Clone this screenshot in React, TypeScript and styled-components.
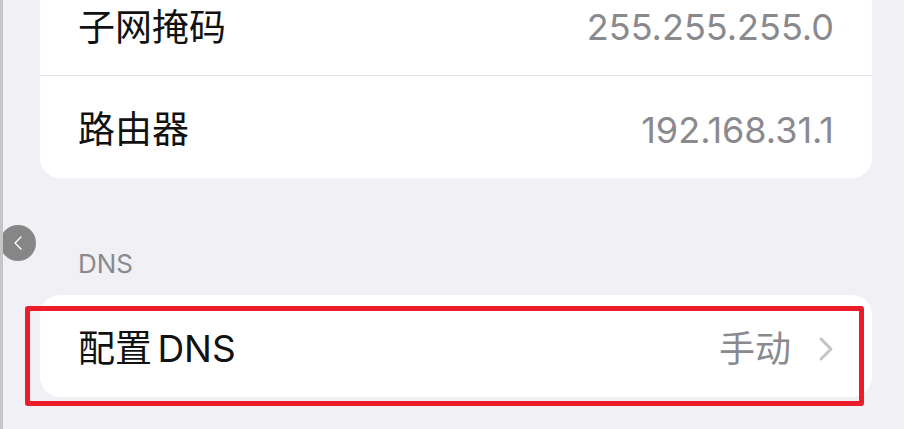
import React from 'react';
import styled, { createGlobalStyle } from 'styled-components';

const GlobalStyle = createGlobalStyle`
  html, body {
    margin: 0;
    padding: 0;
    background: #f0f0f5;
  }
  body {
    font-family: Inter, "Noto Sans CJK SC", sans-serif;
  }
`;

const Page = styled.div`
  position: relative;
  height: 429px;
  overflow: hidden;
  background: #f0f0f5;
  border-left: 3px solid #c6c6c8;
  padding: 0 32px 0 37px;
  box-sizing: border-box;
`;

const Card = styled.div<{ $top?: number }>`
  position: relative;
  background: #ffffff;
  border-radius: 20px;
  margin-top: ${(p) => p.$top ?? 0}px;
`;

const Row = styled.div<{ $divider?: boolean }>`
  height: 102px;
  display: flex;
  align-items: center;
  justify-content: space-between;
  padding: 0 38px 0 38px;
  box-sizing: border-box;
  border-bottom: ${(p) => (p.$divider ? '1px solid #e4e4e9' : 'none')};
  position: relative;
`;

const Label = styled.span`
  font-size: 37px;
  color: #111111;
  line-height: 1;
  padding-top: 5px;
  word-spacing: -5px;
`;

const Value = styled.span`
  display: flex;
  align-items: center;
  gap: 27px;
  font-size: 36px;
  color: #8a8a8e;
  line-height: 1;
  padding-top: 5px;
`;

const SectionHeader = styled.div`
  font-size: 26px;
  line-height: 31px;
  color: #8a8a8e;
  padding: 70px 0 16px 38px;
`;

const Highlight = styled.div`
  position: absolute;
  left: -15px;
  right: 8px;
  top: 11px;
  bottom: -9px;
  border: 5px solid #ec1c28;
  border-radius: 3px;
  pointer-events: none;
`;

const BackButton = styled.div`
  position: absolute;
  left: -3px;
  top: 225px;
  width: 36px;
  height: 36px;
  border-radius: 50%;
  background: rgba(122, 122, 122, 0.9);
  display: flex;
  align-items: center;
  justify-content: center;
`;

const Chevron = () => (
  <svg width="16" height="26" viewBox="0 0 16 26">
    <polyline points="3,3 13,13 3,23" fill="none" stroke="#c4c4c7" strokeWidth="3" strokeLinecap="round" strokeLinejoin="round" />
  </svg>
);

const BackIcon = () => (
  <svg width="12" height="16" viewBox="0 0 12 16">
    <polyline points="9,2 3,8 9,14" fill="none" stroke="#ffffff" strokeWidth="1.4" strokeLinecap="round" strokeLinejoin="round" />
  </svg>
);

export default function App() {
  return (
    <>
      <GlobalStyle />
      <Page>
        <Card $top={-26}>
          <Row $divider>
            <Label>子网掩码</Label>
            <Value>255.255.255.0</Value>
          </Row>
          <Row>
            <Label>路由器</Label>
            <Value>192.168.31.1</Value>
          </Row>
        </Card>
        <SectionHeader>DNS</SectionHeader>
        <Card>
          <Row>
            <Label>配置 DNS</Label>
            <Value>
              手动
              <Chevron />
            </Value>
          </Row>
          <Highlight />
        </Card>
        <BackButton>
          <BackIcon />
        </BackButton>
      </Page>
    </>
  );
}
